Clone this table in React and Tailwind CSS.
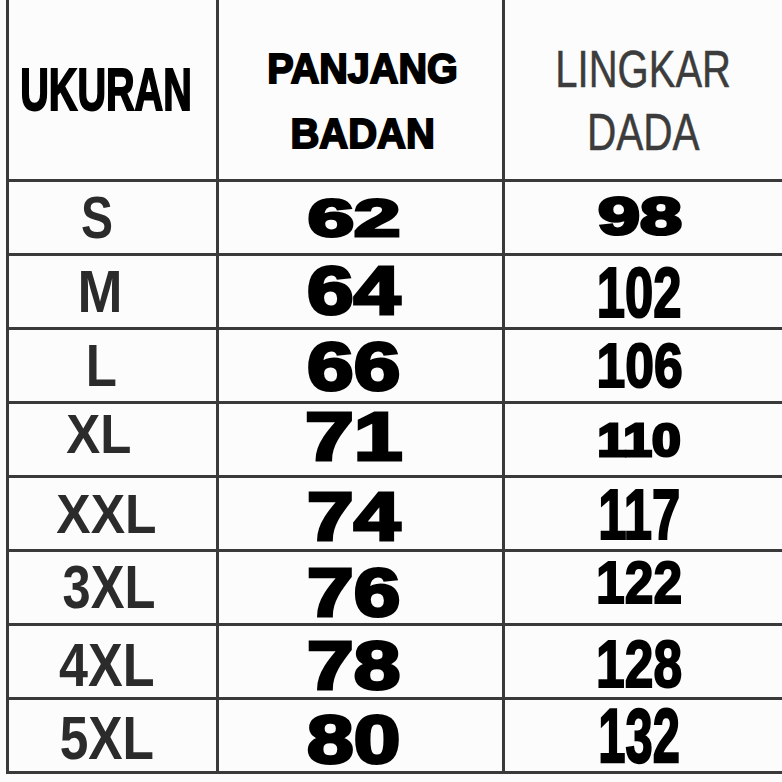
import React from "react";

const heavy = "font-['Liberation_Sans',Arial,sans-serif] font-bold [-webkit-text-stroke:3px_#000]";
const narrow = "font-['Liberation_Sans',Arial,sans-serif] font-bold [-webkit-text-stroke:2px_#000]";

const rows = [
  {
    size: "S",
    sizeCls: "text-[60px] scale-x-[0.8] -translate-x-[7px]",
    pb: "62",
    pbCls: `${heavy} text-[52px] scale-x-[1.6]`,
    ld: "98",
    ldCls: `${heavy} text-[52px] scale-x-[1.45] -translate-y-[2px]`,
  },
  {
    size: "M",
    sizeCls: "text-[60px] scale-x-[0.9] -translate-x-[5px]",
    pb: "64",
    pbCls: `${heavy} text-[66px] scale-x-[1.27] scale-y-[1.04] -translate-y-[2px]`,
    ld: "102",
    ldCls: `${narrow} text-[66px] scale-x-[0.77] scale-y-[1.08]`,
  },
  {
    size: "L",
    sizeCls: "text-[60px] scale-x-[0.85] -translate-x-[3px]",
    pb: "66",
    pbCls: `${heavy} text-[66px] scale-x-[1.27] scale-y-[1.04]`,
    ld: "106",
    ldCls: `${narrow} text-[63px] scale-x-[0.82]`,
  },
  {
    size: "XL",
    sizeCls: "text-[56px] scale-x-[0.91] -translate-y-[6px] -translate-x-[6px]",
    pb: "71",
    pbCls: `${heavy} text-[66px] scale-x-[1.33] scale-y-[1.04] -translate-y-[4px]`,
    ld: "110",
    ldCls: `${heavy} text-[46px] scale-x-[1.12]`,
  },
  {
    size: "XXL",
    sizeCls: "text-[56px] scale-x-[0.92] translate-x-[2px]",
    pb: "74",
    pbCls: `${heavy} text-[66px] scale-x-[1.27] scale-y-[1.04] translate-y-[2px]`,
    ld: "117",
    ldCls: `${narrow} text-[66px] scale-x-[0.77] scale-y-[1.08]`,
  },
  {
    size: "3XL",
    sizeCls: "text-[61px] scale-x-[0.83] translate-x-[4px]",
    pb: "76",
    pbCls: `${heavy} text-[66px] scale-x-[1.27] scale-y-[1.04] translate-y-[4px]`,
    ld: "122",
    ldCls: `${narrow} text-[60px] scale-x-[0.86] -translate-y-[5px]`,
  },
  {
    size: "4XL",
    sizeCls: "text-[62px] scale-x-[0.84] translate-y-[3px] translate-x-[2px]",
    pb: "78",
    pbCls: `${heavy} text-[66px] scale-x-[1.27] scale-y-[1.04] translate-y-[3px]`,
    ld: "128",
    ldCls: `${narrow} text-[66px] scale-x-[0.78] translate-y-[2px]`,
  },
  {
    size: "5XL",
    sizeCls: "text-[62px] scale-x-[0.83] translate-y-[2px] translate-x-[2px]",
    pb: "80",
    pbCls: `${heavy} text-[66px] scale-x-[1.27] scale-y-[1.04] translate-y-[3px]`,
    ld: "132",
    ldCls: `${narrow} text-[66px] scale-x-[0.74] scale-y-[1.14]`,
  },
];

const line = "border-[#3a3a3a]";

export default function App() {
  return (
    <div className="w-[782px] h-[782px] bg-[#fcfcfc] overflow-hidden pl-[6px]">
      <div className="grid grid-cols-[213px_286px_1fr] w-[776px]">
        {/* header */}
        <div className={`h-[182px] border-l-[3px] border-r-[3px] border-b-[3px] ${line} flex items-center justify-center pr-[14px]`}>
          <span className="inline-block leading-none font-['Liberation_Sans',Arial,sans-serif] font-bold text-[60px] text-black scale-x-[0.66] [-webkit-text-stroke:2px_#000]">
            UKURAN
          </span>
        </div>
        <div className={`h-[182px] border-r-[3px] border-b-[3px] ${line} flex flex-col items-center justify-center pt-[22px] pl-[4px]`}>
          <span className="block leading-[65px] font-['Liberation_Sans',Arial,sans-serif] font-bold text-[43px] text-black scale-x-[0.92] [-webkit-text-stroke:2px_#000]">
            PANJANG
          </span>
          <span className="block leading-[65px] font-['Liberation_Sans',Arial,sans-serif] font-bold text-[43px] text-black scale-x-[0.93] [-webkit-text-stroke:2px_#000]">
            BADAN
          </span>
        </div>
        <div className={`h-[182px] border-b-[3px] ${line} flex flex-col items-center justify-center pt-[22px]`}>
          <span className="block leading-[63px] font-['Liberation_Sans',Arial,sans-serif] text-[52px] text-[#3c3c3c] scale-x-[0.77] [-webkit-text-stroke:0.5px_#3c3c3c]">
            LINGKAR
          </span>
          <span className="block leading-[63px] font-['Liberation_Sans',Arial,sans-serif] text-[52px] text-[#3c3c3c] scale-x-[0.78] [-webkit-text-stroke:0.5px_#3c3c3c]">
            DADA
          </span>
        </div>

        {/* rows */}
        {rows.map((r) => (
          <React.Fragment key={r.size}>
            <div className={`h-[74px] border-l-[3px] border-r-[3px] border-b-[3px] ${line} flex items-center justify-center pr-[16px]`}>
              <span className={`inline-block leading-none font-['Liberation_Sans',Arial,sans-serif] font-bold text-[#2b2b2b] ${r.sizeCls}`}>
                {r.size}
              </span>
            </div>
            <div className={`h-[74px] border-r-[3px] border-b-[3px] ${line} flex items-center justify-center pr-[14px]`}>
              <span className={`inline-block leading-none text-black ${r.pbCls}`}>{r.pb}</span>
            </div>
            <div className={`h-[74px] border-b-[3px] ${line} flex items-center justify-center pr-[8px]`}>
              <span className={`inline-block leading-none text-black ${r.ldCls}`}>{r.ld}</span>
            </div>
          </React.Fragment>
        ))}
      </div>
    </div>
  );
}
